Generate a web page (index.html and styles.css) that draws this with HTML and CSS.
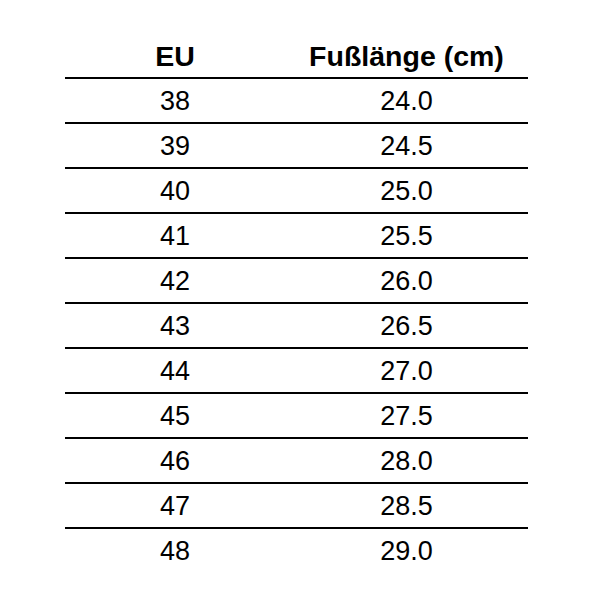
FILE: index.html
```html
<!DOCTYPE html>
<html lang="de">
<head>
<meta charset="utf-8">
<link rel="stylesheet" href="styles.css">
</head>
<body>
<div class="table">
  <div class="row head"><div>EU</div><div>Fußlänge (cm)</div></div>
  <div class="row"><div>38</div><div>24.0</div></div>
  <div class="row"><div>39</div><div>24.5</div></div>
  <div class="row"><div>40</div><div>25.0</div></div>
  <div class="row"><div>41</div><div>25.5</div></div>
  <div class="row"><div>42</div><div>26.0</div></div>
  <div class="row"><div>43</div><div>26.5</div></div>
  <div class="row"><div>44</div><div>27.0</div></div>
  <div class="row"><div>45</div><div>27.5</div></div>
  <div class="row"><div>46</div><div>28.0</div></div>
  <div class="row"><div>47</div><div>28.5</div></div>
  <div class="row last"><div>48</div><div>29.0</div></div>
</div>
</body>
</html>
```
FILE: styles.css
```css
html, body {
  margin: 0;
  padding: 0;
  background: #fff;
}
body {
  font-family: "Liberation Sans", Arial, sans-serif;
  font-size: 27px;
  color: #000;
}
.table {
  margin: 34px 0 0 65px;
  width: 463px;
}
.row {
  display: grid;
  grid-template-columns: 220px 243px;
  height: 42px;
  align-items: center;
  text-align: center;
  border-bottom: 2px solid #000;
  line-height: 30px;
  padding-top: 1px;
}
.head {
  height: 43px;
  font-weight: bold;
  font-size: 28.5px;
  padding-top: 0;
}
.last {
  border-bottom: none;
}
```
